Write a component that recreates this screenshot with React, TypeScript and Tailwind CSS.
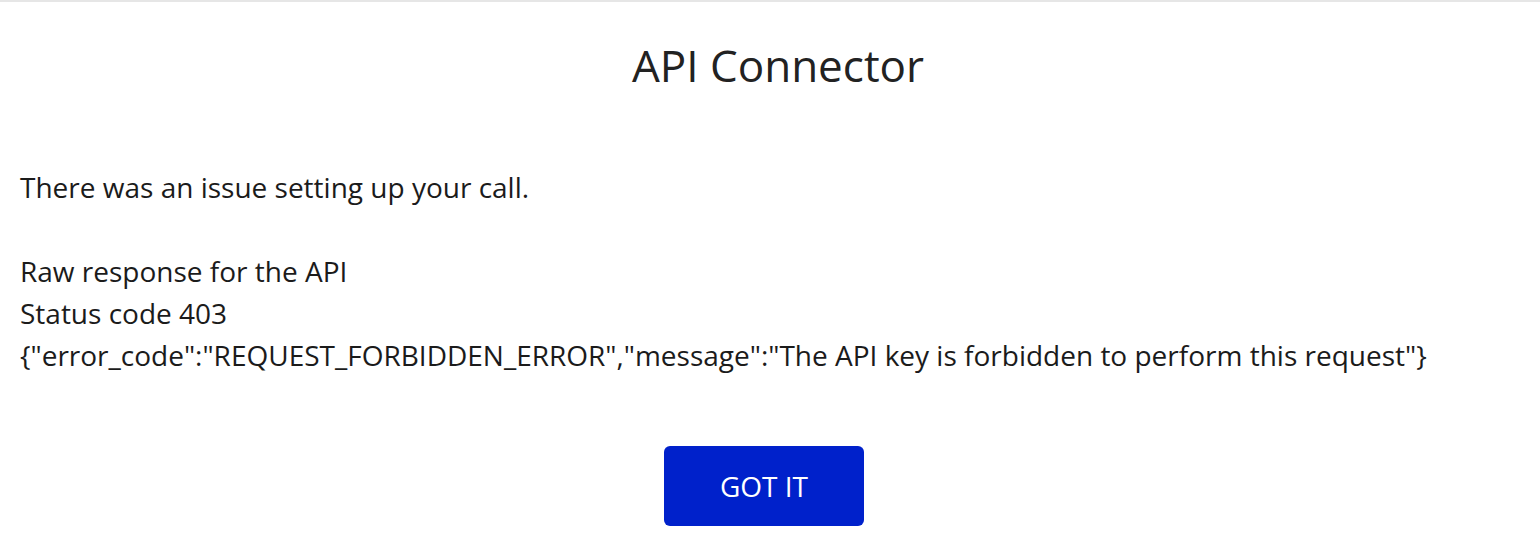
export default function App() {
  return (
    <div className="w-[1540px] h-[550px] bg-white border-t-2 border-[#e6e6e6] font-['Open_Sans',sans-serif] text-[#1b1b1b]">
      <h1 className="pt-[34px] pl-[16px] text-center text-[44px] leading-[58px] text-[#222222]">API Connector</h1>
      <div className="mt-[72px] px-5 text-[28px] leading-[42px]">
        <p>There was an issue setting up your call.</p>
        <p className="mt-[42px]">Raw response for the API</p>
        <p>Status code 403</p>
        <p>{'{"error_code":"REQUEST_FORBIDDEN_ERROR","message":"The API key is forbidden to perform this request"}'}</p>
      </div>
      <div className="mt-[70px] pr-[12px] flex justify-center">
        <button
          type="button"
          className="w-[200px] h-[80px] rounded-md bg-[#0021cb] text-white text-[28px]"
        >
          GOT IT
        </button>
      </div>
    </div>
  )
}
